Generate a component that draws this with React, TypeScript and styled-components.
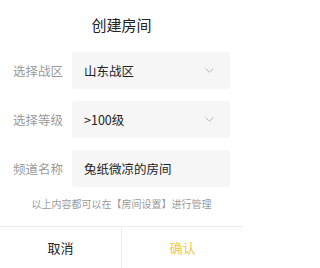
import React from "react";
import styled, { createGlobalStyle } from "styled-components";

const GlobalStyle = createGlobalStyle`
   html, body {
      margin: 0;
      padding: 0;
      background: #ffffff;
   }
   body {
      font-family: "Noto Sans CJK SC", "Noto Sans", sans-serif;
   }
`;

const Dialog = styled.div`
   width: 243px;
   height: 268px;
   display: flex;
   flex-direction: column;
   background: #ffffff;
   overflow: hidden;
`;

const Title = styled.h1`
   margin: 15px 0 0 0;
   height: 20px;
   line-height: 20px;
   font-size: 15px;
   font-weight: 400;
   color: #222;
   text-align: center;
`;

const Form = styled.div`
   display: flex;
   flex-direction: column;
   gap: 12px;
   margin-top: 17px;
   padding: 0 13px;
`;

const Row = styled.div`
   display: flex;
   align-items: center;
`;

const Label = styled.span`
   width: 59px;
   flex-shrink: 0;
   font-size: 12.5px;
   color: #9a9a9a;
   white-space: nowrap;
`;

const Field = styled.div`
   flex: 1;
   height: 37px;
   display: flex;
   align-items: center;
   justify-content: space-between;
   padding: 0 16px 0 12px;
   background: #f6f6f6;
   border-radius: 3px;
   box-sizing: border-box;
`;

const Value = styled.span`
   font-size: 12.5px;
   color: #222;
`;

const Hint = styled.p`
   margin: 10px 0 0 0;
   height: 14px;
   line-height: 14px;
   font-size: 10px;
   color: #9a9a9a;
   text-align: center;
`;

const Footer = styled.div`
   margin-top: auto;
   height: 41px;
   display: flex;
   border-top: 1px solid #ececec;
`;

const Button = styled.button<{ $primary?: boolean }>`
   flex: 1;
   border: none;
   background: transparent;
   padding: 0;
   font-family: inherit;
   font-size: 13px;
   color: ${({ $primary }) => ($primary ? "#eecb45" : "#222")};
   & + & {
      border-left: 1px solid #ececec;
   }
`;

const Chevron = () => (
   <svg width="9" height="5" viewBox="0 0 9 5" fill="none">
      <path d="M0.6 0.6 L4.5 4.2 L8.4 0.6" stroke="#b5b5b5" strokeWidth="1" />
   </svg>
);

export default function App() {
   return (
      <>
         <GlobalStyle />
         <Dialog>
            <Title>创建房间</Title>
            <Form>
               <Row>
                  <Label>选择战区</Label>
                  <Field>
                     <Value>山东战区</Value>
                     <Chevron />
                  </Field>
               </Row>
               <Row>
                  <Label>选择等级</Label>
                  <Field>
                     <Value>&gt;100级</Value>
                     <Chevron />
                  </Field>
               </Row>
               <Row>
                  <Label>频道名称</Label>
                  <Field>
                     <Value>兔纸微凉的房间</Value>
                  </Field>
               </Row>
            </Form>
            <Hint>以上内容都可以在【房间设置】进行管理</Hint>
            <Footer>
               <Button>取消</Button>
               <Button $primary>确认</Button>
            </Footer>
         </Dialog>
      </>
   );
}
